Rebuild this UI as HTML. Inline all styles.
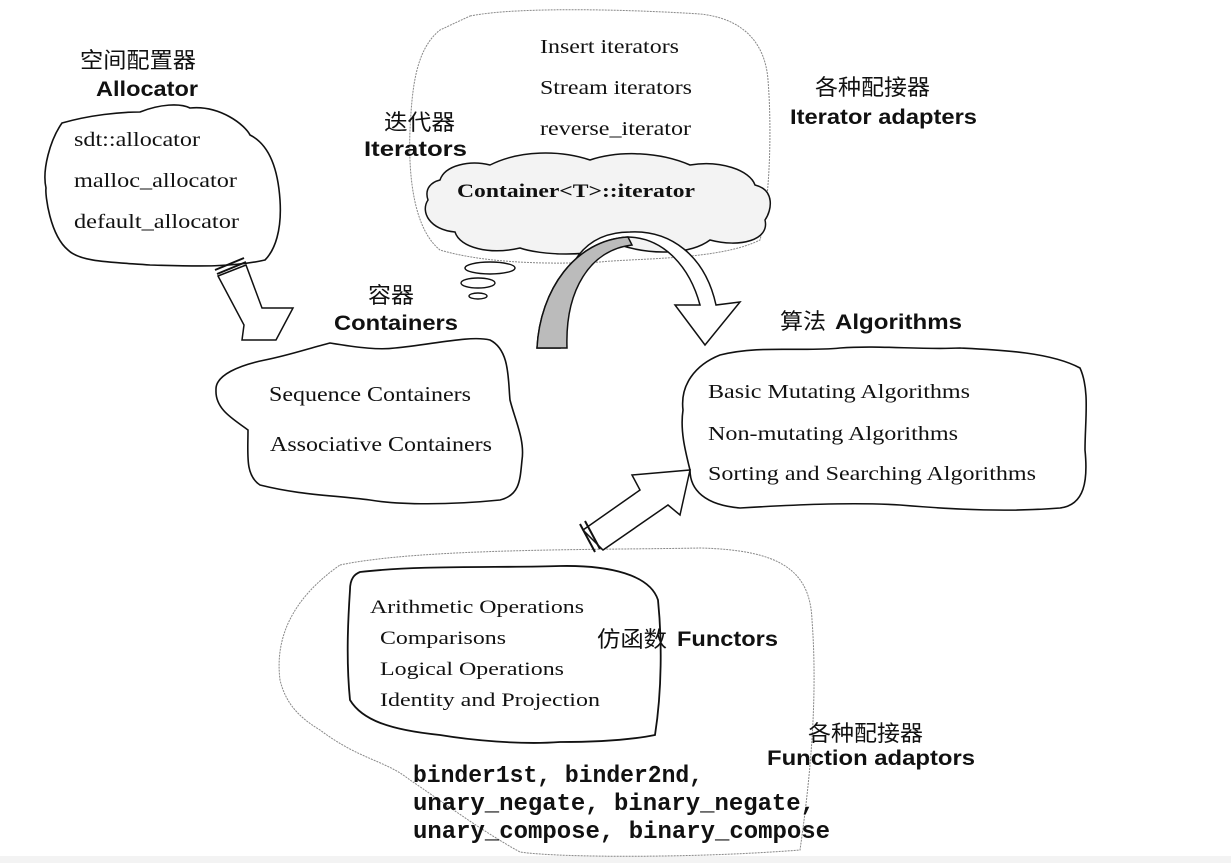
<!DOCTYPE html>
<html><head><meta charset="utf-8"><style>
html,body{margin:0;padding:0;background:#fff;}
svg{display:block}
.s{font-family:"Liberation Serif","Noto Serif CJK SC",serif;fill:#111}
.b{font-family:"Liberation Sans",sans-serif;font-weight:bold;fill:#111}
.c{font-family:"Liberation Sans","Noto Sans CJK SC",sans-serif;fill:#111}
.m{font-family:"Liberation Mono",monospace;fill:#111}
</style></head><body>
<svg width="1231" height="863" viewBox="0 0 1231 863" xmlns="http://www.w3.org/2000/svg">
<rect x="0" y="856" width="1231" height="7" fill="#f3f3f3"/>
<!-- dotted big clouds -->
<path d="M470,16 C520,6 640,10 700,14 C740,18 765,40 768,80 C772,130 770,200 760,240 C720,260 640,258 600,262 C540,265 480,262 440,250 C415,230 408,180 410,130 C412,90 415,50 440,30 Z" fill="none" stroke="#888" stroke-width="1" stroke-dasharray="2,1"/>
<path d="M340,565 C420,548 600,550 700,548 C780,550 810,570 812,620 C818,700 810,780 800,850 C700,858 560,858 520,852 C480,830 440,800 410,780 C385,760 360,760 320,730 C295,715 285,700 280,680 C275,640 290,600 340,565 Z" fill="none" stroke="#888" stroke-width="1" stroke-dasharray="2,1"/>
<!-- allocator cloud -->
<path d="M62,123 C90,115 120,112 140,112 C160,104 180,103 190,108 C220,105 245,125 250,135 C270,145 278,170 280,200 C282,230 275,250 265,260 C230,268 190,266 150,265 C110,262 80,262 68,250 C50,235 45,195 46,188 C42,170 50,140 62,123 Z" fill="#fff" stroke="#111" stroke-width="1.6"/>
<path d="M218,276 L246,265 L262,308 L293,308 L276,340 L242,340 L244,325 Z" fill="#fff" stroke="#111" stroke-width="1.5"/>
<path d="M215,270 L244,258 M217,274 L246,262" stroke="#111" stroke-width="2"/>
<!-- containers cloud -->
<path d="M265,360 C290,355 310,348 330,343 C360,348 380,350 395,348 C430,345 470,335 490,340 C510,350 508,380 510,400 C515,420 525,440 522,460 C520,480 520,495 500,500 C450,505 400,505 370,500 C330,495 300,495 260,485 C245,475 248,455 248,430 C235,420 215,410 216,390 C215,375 240,365 265,360 Z" fill="#fff" stroke="#111" stroke-width="1.6"/>
<!-- algorithms cloud -->
<path d="M720,355 C760,345 800,352 840,348 C880,345 920,350 960,348 C1000,350 1050,352 1080,368 C1090,390 1085,420 1085,450 C1088,480 1085,505 1060,508 C1010,512 960,510 900,505 C850,502 790,505 740,508 C705,505 690,490 690,470 C685,450 680,430 683,410 C680,385 695,365 720,355 Z" fill="#fff" stroke="#111" stroke-width="1.6"/>
<!-- functor inner cloud -->
<path d="M360,572 C420,565 500,568 560,566 C610,565 650,575 658,600 C662,640 662,690 655,735 C630,740 600,742 560,742 C520,745 470,740 440,735 C390,730 362,720 350,700 C346,660 348,620 350,590 C350,578 355,574 360,572 Z" fill="#fff" stroke="#111" stroke-width="1.8"/>
<!-- inner iterator cloud -->
<path d="M440,180 C445,165 470,160 490,165 C520,150 560,150 590,160 C620,150 660,152 690,165 C720,160 750,170 755,185 C775,190 772,210 765,220 C770,240 740,248 710,240 C690,255 650,255 620,245 C590,258 540,255 520,248 C490,255 460,248 455,232 C430,230 420,212 428,200 C424,188 432,182 440,180 Z" fill="#f3f3f3" stroke="#111" stroke-width="1.5"/>
<ellipse cx="490" cy="268" rx="25" ry="6" fill="#fff" stroke="#111" stroke-width="1.4"/>
<ellipse cx="478" cy="283" rx="17" ry="5" fill="#fff" stroke="#111" stroke-width="1.4"/>
<ellipse cx="478" cy="296" rx="9" ry="3" fill="#fff" stroke="#111" stroke-width="1.4"/>
<path d="M537,348 C540,290 575,240 628,237 C665,238 690,268 700,305 L675,305 L705,345 L740,302 L716,305 C705,255 670,230 630,232 C575,232 555,280 560,348 Z" fill="#fff" stroke="#111" stroke-width="1.5"/>
<path d="M537,348 C540,290 575,240 628,237 L632,245 C590,250 565,290 567,348 Z" fill="#bbb" stroke="#111" stroke-width="1.5"/>
<path d="M583,530 L640,490 L632,475 L690,470 L680,515 L668,505 L603,550 Z" fill="#fff" stroke="#111" stroke-width="1.5"/>
<path d="M580,524 L595,552 M585,521 L600,549" stroke="#111" stroke-width="2"/>
<!-- text -->
<text class="c" x="80" y="68" font-size="22" textLength="116" lengthAdjust="spacingAndGlyphs">空间配置器</text>
<text class="b" x="96" y="96" font-size="21" textLength="102" lengthAdjust="spacingAndGlyphs">Allocator</text>
<text class="s" x="74" y="146" font-size="20" textLength="126" lengthAdjust="spacingAndGlyphs">sdt::allocator</text>
<text class="s" x="74" y="187" font-size="20" textLength="163" lengthAdjust="spacingAndGlyphs">malloc_allocator</text>
<text class="s" x="74" y="228" font-size="20" textLength="165" lengthAdjust="spacingAndGlyphs">default_allocator</text>
<text class="s" x="540" y="53" font-size="20" textLength="139" lengthAdjust="spacingAndGlyphs">Insert iterators</text>
<text class="s" x="540" y="94" font-size="20" textLength="152" lengthAdjust="spacingAndGlyphs">Stream iterators</text>
<text class="s" x="540" y="135" font-size="20" textLength="151" lengthAdjust="spacingAndGlyphs">reverse_iterator</text>
<text class="c" x="384" y="130" font-size="22" textLength="71" lengthAdjust="spacingAndGlyphs">迭代器</text>
<text class="b" x="364" y="156" font-size="21" textLength="103" lengthAdjust="spacingAndGlyphs">Iterators</text>
<text class="s" x="457" y="197" font-size="19" font-weight="bold" textLength="238" lengthAdjust="spacingAndGlyphs">Container&lt;T&gt;::iterator</text>
<text class="c" x="815" y="95" font-size="22" textLength="115" lengthAdjust="spacingAndGlyphs">各种配接器</text>
<text class="b" x="790" y="124" font-size="21" textLength="187" lengthAdjust="spacingAndGlyphs">Iterator adapters</text>
<text class="c" x="368" y="303" font-size="22" textLength="46" lengthAdjust="spacingAndGlyphs">容器</text>
<text class="b" x="334" y="330" font-size="21" textLength="124" lengthAdjust="spacingAndGlyphs">Containers</text>
<text class="s" x="269" y="401" font-size="21" textLength="202" lengthAdjust="spacingAndGlyphs">Sequence Containers</text>
<text class="s" x="270" y="451" font-size="21" textLength="222" lengthAdjust="spacingAndGlyphs">Associative Containers</text>
<text class="c" x="780" y="329" font-size="22" textLength="46" lengthAdjust="spacingAndGlyphs">算法</text>
<text class="b" x="835" y="329" font-size="21" textLength="127" lengthAdjust="spacingAndGlyphs">Algorithms</text>
<text class="s" x="708" y="398" font-size="20" textLength="262" lengthAdjust="spacingAndGlyphs">Basic Mutating Algorithms</text>
<text class="s" x="708" y="440" font-size="20" textLength="250" lengthAdjust="spacingAndGlyphs">Non-mutating Algorithms</text>
<text class="s" x="708" y="480" font-size="20" textLength="328" lengthAdjust="spacingAndGlyphs">Sorting and Searching Algorithms</text>
<text class="s" x="370" y="613" font-size="19" textLength="214" lengthAdjust="spacingAndGlyphs">Arithmetic Operations</text>
<text class="s" x="380" y="644" font-size="19" textLength="126" lengthAdjust="spacingAndGlyphs">Comparisons</text>
<text class="s" x="380" y="675" font-size="19" textLength="184" lengthAdjust="spacingAndGlyphs">Logical Operations</text>
<text class="s" x="380" y="706" font-size="19" textLength="220" lengthAdjust="spacingAndGlyphs">Identity and Projection</text>
<text class="c" x="597" y="647" font-size="22" textLength="70" lengthAdjust="spacingAndGlyphs">仿函数</text>
<text class="b" x="677" y="646" font-size="21" textLength="101" lengthAdjust="spacingAndGlyphs">Functors</text>
<text class="c" x="808" y="741" font-size="22" textLength="115" lengthAdjust="spacingAndGlyphs">各种配接器</text>
<text class="b" x="767" y="765" font-size="21" textLength="208" lengthAdjust="spacingAndGlyphs">Function adaptors</text>
<text class="m" x="413" y="782" font-size="24" font-weight="bold" textLength="290" lengthAdjust="spacingAndGlyphs">binder1st, binder2nd,</text>
<text class="m" x="413" y="810" font-size="24" font-weight="bold" textLength="402" lengthAdjust="spacingAndGlyphs">unary_negate, binary_negate,</text>
<text class="m" x="413" y="838" font-size="24" font-weight="bold" textLength="417" lengthAdjust="spacingAndGlyphs">unary_compose, binary_compose</text>
</svg>
</body></html>
